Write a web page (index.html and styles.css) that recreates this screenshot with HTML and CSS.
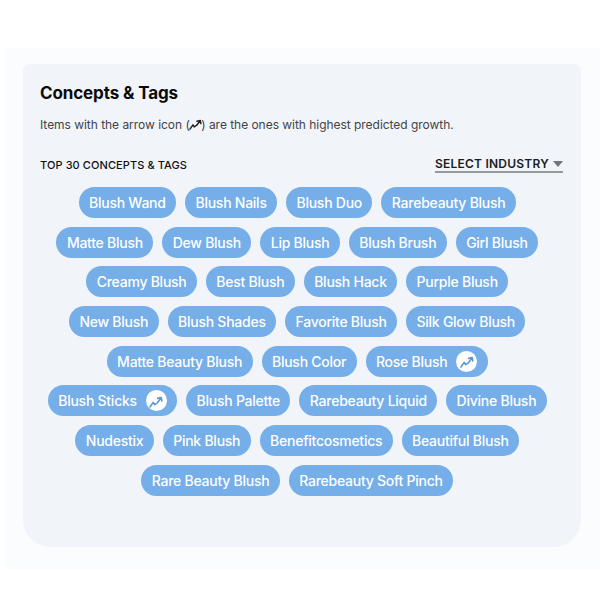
FILE: index.html
```
<!DOCTYPE html>
<html lang="en">
<head>
<meta charset="utf-8">
<title>Concepts &amp; Tags</title>
<link rel="stylesheet" href="styles.css">
</head>
<body>
<svg width="0" height="0" class="defs" aria-hidden="true">
  <symbol id="trend" viewBox="0 0 14 12">
    <path d="M1 11 L4.2 6.4 L5.6 8.6 L8.4 6.8 L11.8 2.2 M8.6 2.4 L12.2 1.5 L12.8 5" fill="none" stroke="currentColor" stroke-width="1.6" stroke-linejoin="round" stroke-linecap="round"/>
  </symbol>
</svg>
<main class="page">
  <section class="card">
    <h1 class="title">Concepts &amp; Tags</h1>
    <p class="note">Items with the arrow icon (<svg class="note-icon"><use href="#trend"/></svg>) are the ones with highest predicted growth.</p>
    <div class="bar">
      <h2 class="subtitle">TOP 30 CONCEPTS &amp; TAGS</h2>
      <div class="select"><span>SELECT INDUSTRY</span><i class="caret"></i></div>
    </div>
    <div class="tags">
      <div class="row"><span class="tag">Blush Wand</span><span class="tag">Blush Nails</span><span class="tag">Blush Duo</span><span class="tag">Rarebeauty Blush</span></div>
      <div class="row"><span class="tag">Matte Blush</span><span class="tag">Dew Blush</span><span class="tag">Lip Blush</span><span class="tag">Blush Brush</span><span class="tag">Girl Blush</span></div>
      <div class="row"><span class="tag">Creamy Blush</span><span class="tag">Best Blush</span><span class="tag">Blush Hack</span><span class="tag">Purple Blush</span></div>
      <div class="row"><span class="tag">New Blush</span><span class="tag">Blush Shades</span><span class="tag">Favorite Blush</span><span class="tag">Silk Glow Blush</span></div>
      <div class="row"><span class="tag">Matte Beauty Blush</span><span class="tag">Blush Color</span><span class="tag">Rose Blush<span class="badge"><svg><use href="#trend"/></svg></span></span></div>
      <div class="row"><span class="tag">Blush Sticks<span class="badge"><svg><use href="#trend"/></svg></span></span><span class="tag">Blush Palette</span><span class="tag">Rarebeauty Liquid</span><span class="tag">Divine Blush</span></div>
      <div class="row"><span class="tag">Nudestix</span><span class="tag">Pink Blush</span><span class="tag">Benefitcosmetics</span><span class="tag">Beautiful Blush</span></div>
      <div class="row"><span class="tag">Rare Beauty Blush</span><span class="tag">Rarebeauty Soft Pinch</span></div>
    </div>
  </section>
</main>
</body>
</html>
```
FILE: styles.css
```
* { box-sizing: border-box; }
body {
  margin: 0;
  height: 600px;
  padding: 48px 0 0 6px;
  background: #fff;
  font-family: Inter, "Liberation Sans", sans-serif;
  overflow: hidden;
}
.defs { display: block; position: absolute; }
.page {
  height: 521px;
  padding: 16px 19.5px 0 16.5px;
  width: 594px;
  background: #fbfcfe;
}
.card {
  width: 558px;
  height: 483px;
  padding: 18px 17.5px 0;
  background: #f1f5fa;
  border-radius: 6px 6px 27px 27px;
}
.title {
  margin: 0;
  font-size: 17px;
  line-height: 23px;
  font-weight: 700;
  letter-spacing: -0.12px;
  color: #0b0b0c;
}
.note {
  margin: 10px 0 0;
  font-size: 12px;
  line-height: 20px;
  letter-spacing: -0.035px;
  color: #424347;
  white-space: nowrap;
}
.note-icon { width: 13px; height: 11px; margin: 0 -0.5px 0 -1px; color: #222; vertical-align: -1px; }
.bar {
  display: flex;
  justify-content: space-between;
  margin-top: 21px;
  height: 17px;
}
.subtitle {
  margin: 0;
  font-size: 11px;
  line-height: 18px;
  font-weight: 500;
  letter-spacing: 0.09px;
  color: #111;
}
.select {
  display: flex;
  align-items: center;
  gap: 4px;
  height: 17px;
  border-bottom: 2px solid #97999d;
  font-size: 12px;
  line-height: 15px;
  font-weight: 600;
  letter-spacing: 0.23px;
  color: #1b1c1e;
}
.caret {
  border: 5.5px solid transparent;
  border-top: 6px solid #737477;
  border-bottom: 0;
}
.tags {
  display: flex;
  flex-direction: column;
  gap: 8.7px;
  margin: 14px -17.5px 0 -26px;
}
.row { display: flex; justify-content: center; gap: 9px; }
.tag {
  display: flex;
  align-items: center;
  height: 31px;
  padding: 0 10.4px;
  border-radius: 16px;
  background: #75aee8;
  color: #fff;
  font-size: 14px;
  font-weight: 500;
  letter-spacing: -0.25px;
  white-space: nowrap;
}
.badge {
  display: flex;
  align-items: center;
  justify-content: center;
  width: 21px;
  height: 21px;
  margin-left: 9px;
  border-radius: 50%;
  background: #fff;
  color: #5f96cf;
}
.badge svg { width: 14px; height: 12px; margin-top: 2px; }
```
